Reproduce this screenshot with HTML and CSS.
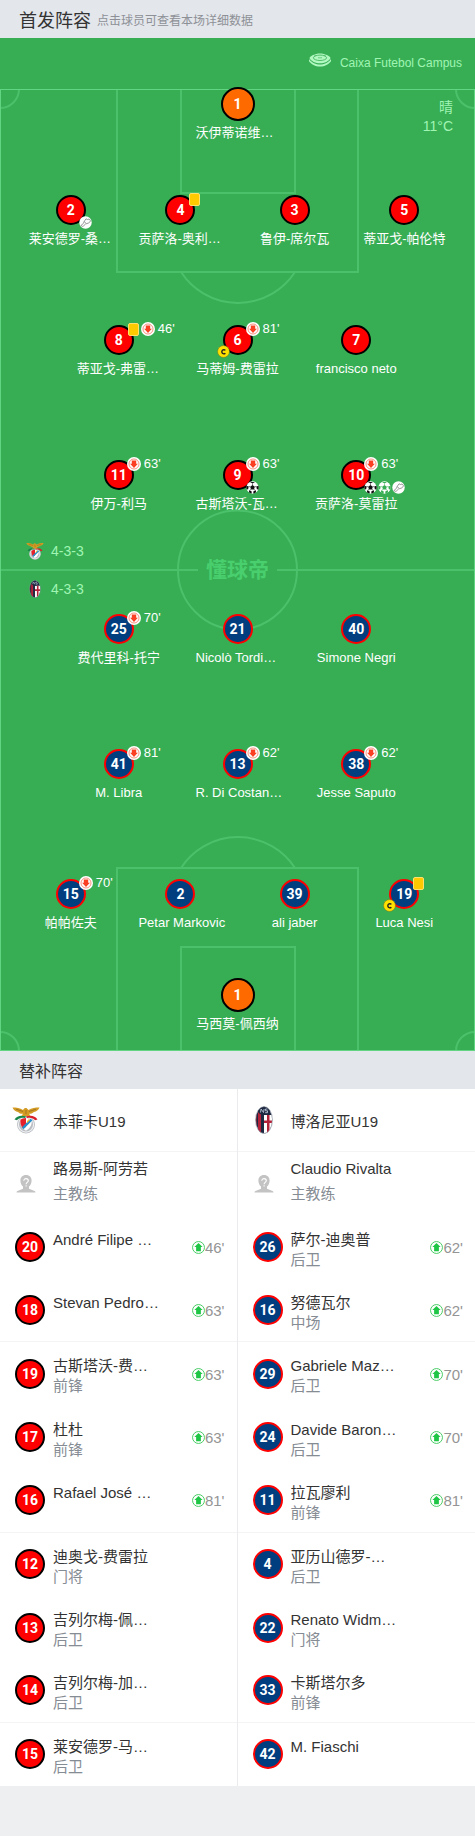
FILE: index.html
```html
<!DOCTYPE html>
<html lang="zh-CN">
<head>
  <meta charset="UTF-8">
  <meta name="viewport" content="width=device-width, initial-scale=1">
  <title>首发阵容</title>
  <link rel="stylesheet" href="styles.css">
</head>
<body>
  <svg class="sprite" aria-hidden="true">
    <symbol id="down" viewBox="0 0 14 14">
      <circle cx="7" cy="7" r="7" fill="#fff"/>
      <circle cx="7" cy="7" r="5" fill="none" stroke="#f98472" stroke-width="0.9"/>
      <path d="M4.8 3.4h4.400v3.300h1.700L7 11 3.100 6.700h1.700z" fill="#fb3f22"/>
    </symbol>
    <symbol id="up" viewBox="0 0 12 12">
      <circle cx="6" cy="6" r="5.5" fill="#fff" stroke="#45cb62" stroke-width="0.9"/>
      <path d="M6 1.800l3.800 3.800H8.200v3.800H3.800V5.600H2.200z" fill="#1fc645"/>
    </symbol>
    <symbol id="ball" viewBox="0 0 14 14">
      <circle cx="7" cy="7" r="6.6" fill="#fff"/>
      <path d="M7 4.4l2.5 1.8-.9 2.9H5.4l-.9-2.9zM4.3 1.2h5.4L7 2.8zM.6 5.2L2.9 6 2.3 8.9.7 9.2a6.6 6.6 0 0 1-.1-4zM13.4 5.2L11.1 6l.6 2.9 1.6.3a6.6 6.6 0 0 0 .1-4zM3 12.2l.6-2.3 2.6 1.3-.2 2.2A6.6 6.6 0 0 1 3 12.2zM11 12.2l-.6-2.3-2.6 1.3.2 2.2a6.6 6.6 0 0 0 3-1.2z" fill="currentColor"/>
      <path d="M7 4.4V2.8M4.5 6.2L2.9 6M9.5 6.2l1.6-.2M5.4 9.1l-1.6 1M8.600 9.100l1.600 1" stroke="currentColor" stroke-width="0.6"/>
    </symbol>
    <symbol id="boot" viewBox="0 0 14 14">
      <circle cx="7" cy="7" r="6.7" fill="#fff"/>
      <path d="M2.200 10.200c1.400-.7 2.600-2.200 3.300-4.200L7.600 3l1.300.8c.8.200 1.500-.1 1.900-.8l1.400 1.700c.1 1.400-.9 2.500-2.300 3L7 8.600l-2 2c-1 .9-2.300.8-2.800-.4zM5.500 6l1.800 1.400" fill="none" stroke="#777" stroke-width="0.8"/>
    </symbol>
    <symbol id="captain" viewBox="0 0 14 14">
      <circle cx="7" cy="7" r="6.4" fill="#ffe100" stroke="#6f7a20" stroke-width="0.6"/>
      <path d="M9 5.800A2.200 2.200 0 1 0 9 8.800" fill="none" stroke="#222" stroke-width="1.500"/>
    </symbol>
    <symbol id="benfica" viewBox="0 0 28 28">
      <circle cx="14" cy="18.500" r="9" fill="#b9bcc2"/>
      <circle cx="14" cy="18.500" r="7.600" fill="none" stroke="#eef0f2" stroke-width="1.200"/>
      <path d="M8.500 13.500q5.500-3 11 0c1 5-1.500 9-5.500 11.200-4-2.200-6.500-6.200-5.500-11.200z" fill="#fff"/>
      <path d="M8.500 13.500q2.500-1.500 5.500-1.500v9l-3.500 1C8.700 19.500 8 16.500 8.500 13.500z" fill="#e5202b"/>
      <path d="M18.500 12.800l2 1.500-9 9-1.500-2z" fill="#278fcb"/>
      <path d="M15 15l2-2 1 1-3 3z" fill="#f2bf33"/>
      <path d="M2.500 13.500C5 9.500 9 9 14 10.300L13 12c-4-.8-6.500 0-8 2.200z" fill="#158548"/>
      <path d="M25.500 13.500C23 9.500 19 9 14 10.300L15 12c4-.8 6.500 0 8 2.200z" fill="#d91f2a"/>
      <path d="M.5 1.500c4 0 7.500.6 10.500 2.500l1.500-1.700c1.200-.8 2.500-.4 3 .8L16.500 4C19.500 2 23.500 1.500 27.500 1.500c-1 2.500-3 4-5.500 4.500-1.800 1.500-3.500 2-5 1.800L18.500 10h-9L11 7.800C9 8 7.500 7.500 6 6 3.500 5.500 1.500 4 .5 1.500z" fill="#d39b24"/>
      <path d="M4 3.200l7 2.300M24 3.200l-7 2.300M14 4v4" stroke="#8c641c" stroke-width="0.700"/>
    </symbol>
    <symbol id="bologna" viewBox="0 0 28 28">
      <clipPath id="oval"><ellipse cx="14" cy="14" rx="8.200" ry="13.300"/></clipPath>
      <g clip-path="url(#oval)">
        <path d="M5 0h18v28H5z" fill="#1e2941"/>
        <path d="M8 6h3v22H8zM5 8h1.500v14H5z" fill="#b4223a"/>
        <path d="M14 9h9v19h-9z" fill="#fff"/>
        <path d="M17 9h2.500v19H17zM14 14.500h9V17h-9z" fill="#b4223a"/>
        <path d="M8 0h12v6c-2 4-10 4-12 0z" fill="#1e2941"/>
        <path d="M10.500 6.500l.6-3.500 2.400 3.500.6-3.500M17.500 3h-2v1.800h2v1.900h-2.300" fill="none" stroke="#b9c5d6" stroke-width="0.900"/>
      </g>
      <ellipse cx="14" cy="14" rx="8.500" ry="13.500" fill="none" stroke="#9097a5" stroke-width="0.600"/>
    </symbol>
    <symbol id="coach" viewBox="0 0 20 20">
      <path d="M10 1c3.600 0 5.600 2.300 5.600 5.600 0 2.600-1 4.700-2.600 6v2.200l5.500 2.200c.7.300 1 .8 1 1.600H.5c0-.8.300-1.300 1-1.600L7 14.800v-2.200c-1.600-1.300-2.600-3.400-2.600-6C4.400 3.300 6.400 1 10 1z" fill="#c3c3c3"/>
      <path d="M7.800 6.800c0-3 4.500-2.800 4.500 0 0 1.700-2.200 1.500-2.200 3.400M10.100 11.200v1.300" fill="none" stroke="#fff" stroke-width="1.100"/>
    </symbol>
    <symbol id="stadium" viewBox="0 0 22 14">
      <path d="M0 6c3 4 7 5.500 11 5.500S19 10 22 6v2.200c-2 3-6.500 5.300-11 5.300S2 11.200 0 8.200z" fill="#b0f7c0"/>
      <path d="M11 .5C16 .5 21 3 21.500 5c-1.500 3.300-6 5.300-10.500 5.300S2 8.300.5 5C1 3 6 .5 11 .5z" fill="#b0f7c0"/>
      <ellipse cx="11" cy="4.800" rx="6.600" ry="2.700" fill="none" stroke="#37ae54" stroke-width="0.800"/>
      <path d="M5 1.800l2 1.200M17 1.800l-2 1.200M9 4.800h4" fill="none" stroke="#37ae54" stroke-width="0.600"/>
    </symbol>
  </svg>

  <header class="bar">
    <h1>首发阵容</h1>
    <span class="hint">点击球员可查看本场详细数据</span>
  </header>

  <main>
    <section class="pitch">
      <svg class="lines" viewBox="0 0 475 962" preserveAspectRatio="none" fill="none" stroke="#4cc16b" stroke-width="2">
        <path d="M117 0V183H358V0M181 0V104H295V0M181 183A68 68 0 0 0 295 183"/>
        <path d="M117 962V779H358V962M181 962V858H295V962M181 779A68 68 0 0 1 295 779"/>
        <path d="M0 481H198M277 481H475"/>
        <circle cx="237.500" cy="481" r="59.500"/>
        <path d="M19 0A19 19 0 0 1 0 19M456 0A19 19 0 0 0 475 19M0 943A19 19 0 0 1 19 962M475 943A19 19 0 0 0 456 962"/>
        <rect x="0.500" y="0.500" width="474" height="961" stroke="#61d582" stroke-width="1"/>
      </svg>

      <div class="lineup">
        <div class="stadium">
          <svg width="22" height="14"><use href="#stadium"/></svg>
          <span>Caixa Futebol Campus</span>
        </div>

        <div class="keeper-row">
          <a class="player keeper" href="#">
            <span class="shirt">1</span>
            <span class="name cut">沃伊蒂诺维…</span>
          </a>
          <p class="weather">晴<br>11°C</p>
        </div>

        <div class="row four home back">
          <a class="player" href="#">
            <span class="shirt">2<span class="events bottom"><svg><use href="#boot"/></svg></span></span>
            <span class="name cut">莱安德罗-桑…</span>
          </a>
          <a class="player" href="#">
            <span class="shirt">4<span class="events"><i class="card"></i></span></span>
            <span class="name cut">贡萨洛-奥利…</span>
          </a>
          <a class="player" href="#">
            <span class="shirt">3</span>
            <span class="name">鲁伊-席尔瓦</span>
          </a>
          <a class="player" href="#">
            <span class="shirt">5</span>
            <span class="name">蒂亚戈-帕伦特</span>
          </a>
        </div>

        <div class="row home middle">
          <a class="player" href="#">
            <span class="shirt">8<span class="events"><i class="card"></i><svg><use href="#down"/></svg><time>46'</time></span></span>
            <span class="name cut">蒂亚戈-弗雷…</span>
          </a>
          <a class="player" href="#">
            <span class="shirt">6<span class="events"><svg><use href="#down"/></svg><time>81'</time></span><svg class="captain"><use href="#captain"/></svg></span>
            <span class="name">马蒂姆-费雷拉</span>
          </a>
          <a class="player" href="#">
            <span class="shirt">7</span>
            <span class="name">francisco neto</span>
          </a>
        </div>

        <div class="row home front">
          <a class="player" href="#">
            <span class="shirt">11<span class="events"><svg><use href="#down"/></svg><time>63'</time></span></span>
            <span class="name">伊万-利马</span>
          </a>
          <a class="player" href="#">
            <span class="shirt">9<span class="events"><svg><use href="#down"/></svg><time>63'</time></span><span class="events bottom"><svg class="goal"><use href="#ball"/></svg></span></span>
            <span class="name cut">古斯塔沃-瓦…</span>
          </a>
          <a class="player" href="#">
            <span class="shirt">10<span class="events"><svg><use href="#down"/></svg><time>63'</time></span><span class="events bottom"><svg class="goal"><use href="#ball"/></svg><svg class="penalty"><use href="#ball"/></svg><svg><use href="#boot"/></svg></span></span>
            <span class="name">贡萨洛-莫雷拉</span>
          </a>
        </div>

        <div class="halfway">
          <div class="formations">
            <p><svg width="18" height="18"><use href="#benfica"/></svg>4-3-3</p>
            <p><svg width="18" height="18"><use href="#bologna"/></svg>4-3-3</p>
          </div>
          <strong class="brand">懂球帝</strong>
        </div>

        <div class="row away">
          <a class="player" href="#">
            <span class="shirt">25<span class="events"><svg><use href="#down"/></svg><time>70'</time></span></span>
            <span class="name">费代里科-托宁</span>
          </a>
          <a class="player" href="#">
            <span class="shirt">21</span>
            <span class="name cut">Nicolò Tordi…</span>
          </a>
          <a class="player" href="#">
            <span class="shirt">40</span>
            <span class="name">Simone Negri</span>
          </a>
        </div>

        <div class="row away front">
          <a class="player" href="#">
            <span class="shirt">41<span class="events"><svg><use href="#down"/></svg><time>81'</time></span></span>
            <span class="name">M. Libra</span>
          </a>
          <a class="player" href="#">
            <span class="shirt">13<span class="events"><svg><use href="#down"/></svg><time>62'</time></span></span>
            <span class="name cut">R. Di Costan…</span>
          </a>
          <a class="player" href="#">
            <span class="shirt">38<span class="events"><svg><use href="#down"/></svg><time>62'</time></span></span>
            <span class="name">Jesse Saputo</span>
          </a>
        </div>

        <div class="row four away middle">
          <a class="player" href="#">
            <span class="shirt">15<span class="events"><svg><use href="#down"/></svg><time>70'</time></span></span>
            <span class="name">帕帕佐夫</span>
          </a>
          <a class="player" href="#">
            <span class="shirt">2</span>
            <span class="name">Petar Markovic</span>
          </a>
          <a class="player" href="#">
            <span class="shirt">39</span>
            <span class="name">ali jaber</span>
          </a>
          <a class="player" href="#">
            <span class="shirt">19<span class="events"><i class="card"></i></span><svg class="captain"><use href="#captain"/></svg></span>
            <span class="name">Luca Nesi</span>
          </a>
        </div>

        <div class="keeper-row last">
          <a class="player keeper" href="#">
            <span class="shirt">1</span>
            <span class="name">马西莫-佩西纳</span>
          </a>
        </div>
      </div>
    </section>

    <h2 class="bar">替补阵容</h2>

    <section class="bench">
      <ul class="team home">
        <li class="club"><svg class="logo"><use href="#benfica"/></svg>本菲卡U19</li>
        <li class="coach"><svg class="avatar"><use href="#coach"/></svg><p>路易斯-阿劳若<small>主教练</small></p></li>
        <li><span class="shirt">20</span><p>André Filipe …</p><time><svg><use href="#up"/></svg>46'</time></li>
        <li><span class="shirt">18</span><p>Stevan Pedro…</p><time><svg><use href="#up"/></svg>63'</time></li>
        <li><span class="shirt">19</span><p>古斯塔沃-费…<small>前锋</small></p><time><svg><use href="#up"/></svg>63'</time></li>
        <li><span class="shirt">17</span><p>杜杜<small>前锋</small></p><time><svg><use href="#up"/></svg>63'</time></li>
        <li><span class="shirt">16</span><p>Rafael José …</p><time><svg><use href="#up"/></svg>81'</time></li>
        <li><span class="shirt">12</span><p>迪奥戈-费雷拉<small>门将</small></p></li>
        <li><span class="shirt">13</span><p>吉列尔梅-佩…<small>后卫</small></p></li>
        <li><span class="shirt">14</span><p>吉列尔梅-加…<small>后卫</small></p></li>
        <li><span class="shirt">15</span><p>莱安德罗-马…<small>后卫</small></p></li>
      </ul>
      <ul class="team away">
        <li class="club"><svg class="logo"><use href="#bologna"/></svg>博洛尼亚U19</li>
        <li class="coach"><svg class="avatar"><use href="#coach"/></svg><p>Claudio Rivalta<small>主教练</small></p></li>
        <li><span class="shirt">26</span><p>萨尔-迪奥普<small>后卫</small></p><time><svg><use href="#up"/></svg>62'</time></li>
        <li><span class="shirt">16</span><p>努德瓦尔<small>中场</small></p><time><svg><use href="#up"/></svg>62'</time></li>
        <li><span class="shirt">29</span><p>Gabriele Maz…<small>后卫</small></p><time><svg><use href="#up"/></svg>70'</time></li>
        <li><span class="shirt">24</span><p>Davide Baron…<small>后卫</small></p><time><svg><use href="#up"/></svg>70'</time></li>
        <li><span class="shirt">11</span><p>拉瓦廖利<small>前锋</small></p><time><svg><use href="#up"/></svg>81'</time></li>
        <li><span class="shirt">4</span><p>亚历山德罗-…<small>后卫</small></p></li>
        <li><span class="shirt">22</span><p>Renato Widm…<small>门将</small></p></li>
        <li><span class="shirt">33</span><p>卡斯塔尔多<small>前锋</small></p></li>
        <li><span class="shirt">42</span><p>M. Fiaschi</p></li>
      </ul>
    </section>
  </main>
</body>
</html>
```

FILE: styles.css
```css
* { box-sizing: border-box; }
body { margin: 0; background: #eeeff1; color: #333; font-family: "Liberation Sans", "Noto Sans CJK SC", sans-serif; font-size: 15px; }
h1, h2, p, ul { margin: 0; padding: 0; font-weight: normal; }
a { color: inherit; text-decoration: none; }
svg { display: block; flex: none; }
.sprite { position: absolute; width: 0; height: 0; }

.bar { display: flex; align-items: center; gap: 6px; height: 38px; padding: 0 19px; background: #e3e6eb; font-size: 16px; }
.bar h1 { font-size: 18px; }
.hint { font-size: 12px; color: #8d9096; }

/* pitch: markings and players share one grid cell */
.pitch { display: grid; background: #37ae54; color: #fff; font-size: 13px; }
.lines, .lineup { grid-area: 1 / 1; }
.lines { width: 100%; height: 962px; margin-top: 51px; }

.stadium { display: flex; justify-content: flex-end; gap: 9px; height: 49px; padding: 15px 13px 0 0; color: #a0f5b3; font-size: 12px; line-height: 20px; }

.keeper-row { display: grid; grid-template-columns: 1fr auto 1fr; }
.keeper-row .player { grid-column: 2; }
.keeper-row.last { margin-top: 46px; }
.weather { padding: 11px 22px 0 0; color: #a0f5b3; font-size: 14px; line-height: 19px; text-align: right; }

.row { display: flex; justify-content: center; }
.row .player { width: 25%; }
.row.four { padding: 0 18px; }
.row.four .player { width: 24%; }
.row.four .player:nth-child(2), .row.four .player:nth-child(3) { width: 26%; }
.back { margin-top: 53px; }
.middle { margin-top: 77px; }
.front { margin-top: 82px; }

.player { display: flex; flex-direction: column; align-items: center; gap: 5px; }
.name { width: 84px; line-height: 18px; text-align: center; white-space: nowrap; }
.name.cut { text-align: left; }

.shirt { position: relative; display: flex; flex: none; align-items: center; justify-content: center; width: 30px; height: 30px; border-radius: 50%; color: #fff; font: bold 14px Roboto, sans-serif; }
.home .shirt { background: #fe0000; border: 2px solid #000; }
.away .shirt { background: #003e80; border: 2px solid #fe0000; }
.keeper { gap: 3px; }
.keeper .shirt { width: 34px; height: 34px; background: #ff6a00; border: 2px solid #000; }

.events { position: absolute; top: -5px; left: 21px; display: flex; align-items: center; gap: 1px; height: 14px; font: 13px "Liberation Sans", sans-serif; }
.events.bottom { top: 18px; }
.events svg { width: 14px; height: 14px; }
.events.bottom svg, .captain { width: 13px; height: 13px; }
.events time { padding: 0 0 2px 2px; }
.card { width: 11px; height: 13px; margin: 0 1px; border: 1px solid #ffdf70; border-radius: 2px; background: #ffcb00; }
.goal { color: #111; }
.penalty { color: #37ae54; }
.captain { position: absolute; top: 18px; left: -8px; }

.halfway { display: grid; grid-template-columns: 1fr auto 1fr; align-items: center; margin: 19px 0 6px; }
.formations { padding-left: 26px; color: #a0f5b3; font-size: 14px; }
.formations p { display: flex; align-items: center; gap: 7px; height: 38px; }
.brand { color: #49cf6e; font-size: 21px; font-weight: bold; line-height: 30px; }

/* substitutes */
.bench { display: grid; grid-template-columns: 1fr 1fr; min-height: 697px; background: #fff; }
.team { display: grid; grid-auto-rows: 1fr; list-style: none; }
.team.home { border-right: 1px solid #ebebed; }
.team li { display: flex; align-items: center; gap: 8px; padding: 0 12px 0 15px; }
.team li:nth-child(3n+1) { border-bottom: 1px solid #f4f4f5; }
.team li:last-child { border-bottom: 0; }
.team p { flex: 1; align-self: flex-start; padding-top: 14px; line-height: 20px; white-space: nowrap; }
.team small { display: block; color: #868c94; font-size: 15px; }
.team time { display: flex; align-items: center; color: #949494; }
.team time svg { width: 13px; height: 13px; }
.team .club { gap: 13px; padding-left: 12px; }
.logo { width: 28px; height: 28px; }
.avatar { width: 20px; height: 20px; }
.team .coach { gap: 17px; padding-left: 16px; }
.team .coach p { padding-top: 4px; line-height: 25px; }
```
